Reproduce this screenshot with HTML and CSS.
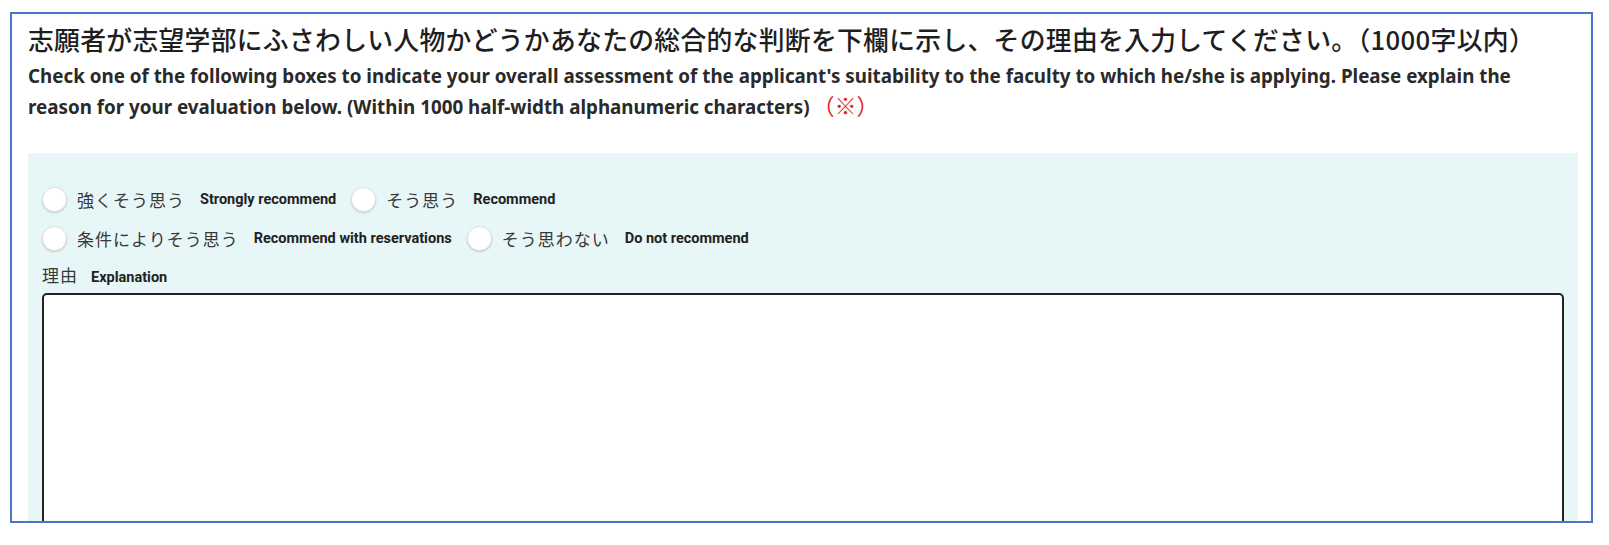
FILE: index.html
```html
<!DOCTYPE html>
<html lang="ja">
<head>
  <meta charset="UTF-8" />
  <meta name="viewport" content="width=device-width, initial-scale=1.0" />
  <title>推薦書 評価</title>
  <link rel="stylesheet" href="styles.css">
</head>
<body>
  <div class="frame">
    <div class="question">
      <h1>志願者が志望学部にふさわしい人物かどうかあなたの総合的な判断を下欄に示し、その理由を入力してください。（1000字以内）</h1>
      <p class="question-en">Check one of the following boxes to indicate your overall assessment of the applicant's suitability to the faculty to which he/she is applying. Please explain the reason for your evaluation below. (Within 1000 half-width alphanumeric characters)<span class="required">（※）</span></p>
    </div>

    <div class="panel">
      <div class="choices">
        <label class="choice">
          <input type="radio" name="assessment" value="1" />
          <span class="ja">強くそう思う</span>
          <span class="en">Strongly recommend</span>
        </label>
        <label class="choice">
          <input type="radio" name="assessment" value="2" />
          <span class="ja">そう思う</span>
          <span class="en">Recommend</span>
        </label>
      </div>
      <div class="choices">
        <label class="choice">
          <input type="radio" name="assessment" value="3" />
          <span class="ja">条件によりそう思う</span>
          <span class="en">Recommend with reservations</span>
        </label>
        <label class="choice">
          <input type="radio" name="assessment" value="4" />
          <span class="ja">そう思わない</span>
          <span class="en">Do not recommend</span>
        </label>
      </div>

      <label class="field-label" for="reason"><span class="ja">理由</span><span class="en">Explanation</span></label>
      <textarea id="reason" class="reason"></textarea>
    </div>
  </div>
</body>
</html>
```

FILE: styles.css
```css
body {
  margin: 0;
  padding: 0;
  background-color: #fff;
  color: #222;
  font-family: "Noto Sans CJK JP", "Noto Sans", sans-serif;
}
.frame {
  box-sizing: border-box;
  width: 1583px;
  height: 511px;
  margin: 12px 0 0 10px;
  border: 2px solid #4a75c8;
  overflow: hidden;
}
.question {
  padding: 7px 16px 0 16px;
}
.question h1 {
  margin: 0;
  font-size: 25.8px;
  font-weight: 500;
  line-height: 36px;
  letter-spacing: 0.3px;
  color: #1e1e1e;
}
.question-en {
  margin: 4px 0 0 0;
  font-family: "Noto Sans", "Noto Sans CJK JP", sans-serif;
  font-size: 18.8px;
  font-weight: 700;
  line-height: 31px;
  color: #2a2a2a;
}
.required {
  margin-left: 3px;
  font-family: "Noto Sans CJK JP", sans-serif;
  color: #e8221e;
  font-size: 22px;
  font-weight: 400;
  line-height: 1;
}
.panel {
  margin: 30px 13px 0 16px;
  padding: 27px 14px 0 14px;
  background-color: #e7f6f6;
  height: 400px;
}
.choices {
  display: flex;
  align-items: center;
  height: 39px;
}
.choice {
  display: flex;
  align-items: center;
  margin-right: 15px;
  cursor: pointer;
}
.choice input {
  appearance: none;
  -webkit-appearance: none;
  width: 25px;
  height: 25px;
  margin: 0 10px 0 0;
  border-radius: 50%;
  background-color: #fff;
  border: 1px solid #e2e2e2;
  box-shadow: 0 1px 2px rgba(0, 0, 0, 0.18);
}
.ja {
  font-size: 17px;
  letter-spacing: 1px;
  color: #383838;
}
.en {
  margin-left: 15px;
  font-family: Roboto, "Liberation Sans", sans-serif;
  font-size: 14.5px;
  font-weight: 700;
  color: #222;
}
.field-label {
  display: block;
  margin-top: 4px;
}
.field-label .en {
  margin-left: 13px;
}
.reason {
  display: block;
  box-sizing: border-box;
  width: 100%;
  height: 300px;
  margin-top: 6px;
  border: 2px solid #222;
  border-radius: 5px;
  background-color: #fff;
  resize: none;
}
```
